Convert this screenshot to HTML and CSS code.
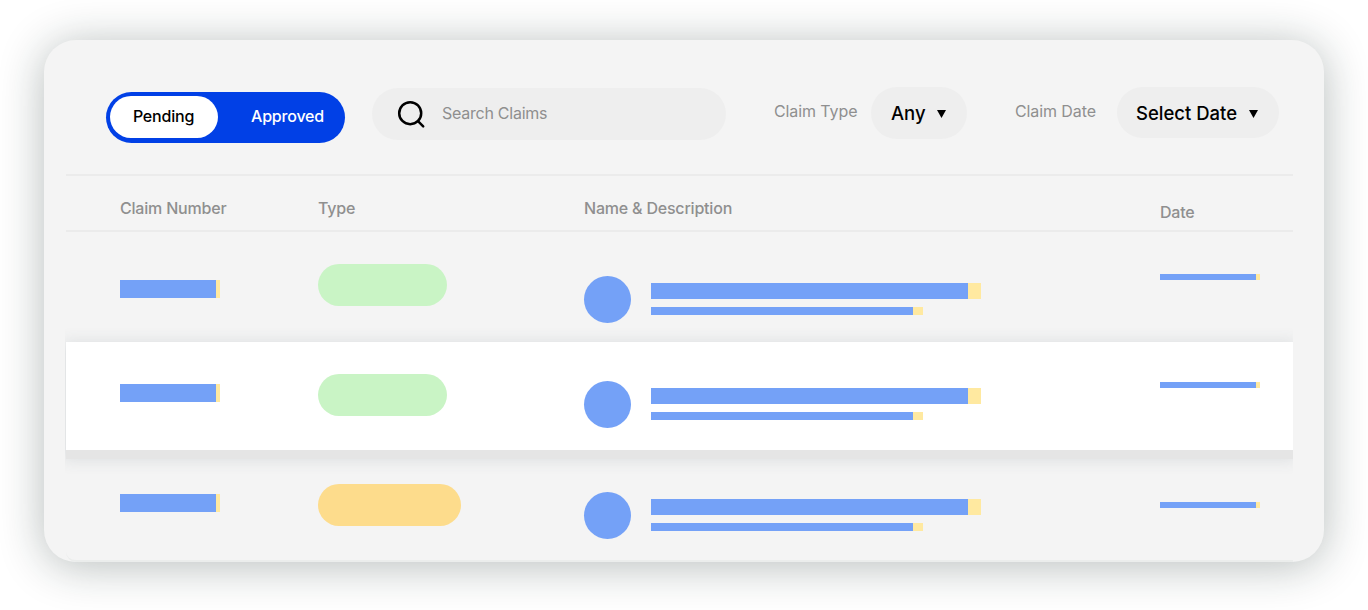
FILE: index.html
```html
<!DOCTYPE html>
<html lang="en">
<head>
    <meta charset="UTF-8">
    <meta name="viewport" content="width=device-width, initial-scale=1.0">
    <title>Claims</title>
    <link rel="stylesheet" href="styles.css">
</head>
<body>
    <div class="card">
        <div class="toolbar">
            <div class="toggle">
                <button class="toggle-btn active">Pending</button>
                <button class="toggle-btn">Approved</button>
            </div>
            <div class="search">
                <svg class="search-icon" width="30" height="30" viewBox="0 0 30 30" fill="none" stroke="#000" stroke-width="2.5" stroke-linecap="round">
                    <circle cx="14.2" cy="14.2" r="11"/>
                    <path d="M22 22.2l5.2 5.1"/>
                </svg>
                <span class="search-text">Search Claims</span>
            </div>
            <span class="filter-label label-type">Claim Type</span>
            <button class="select select-type">Any
                <svg class="arrow" width="9" height="8" viewBox="0 0 9 8"><path d="M0 0h9L4.5 8z"/></svg>
            </button>
            <span class="filter-label label-date">Claim Date</span>
            <button class="select select-date">Select Date
                <svg class="arrow" width="9" height="8" viewBox="0 0 9 8"><path d="M0 0h9L4.5 8z"/></svg>
            </button>
        </div>

        <div class="row header">
            <span>Claim Number</span>
            <span>Type</span>
            <span>Name &amp; Description</span>
            <span class="date-head">Date</span>
        </div>

        <div class="row row-first">
            <div class="bar bar-number"></div>
            <div class="tag tag-green"></div>
            <div class="person">
                <div class="avatar"></div>
                <div class="lines">
                    <div class="bar bar-name"></div>
                    <div class="bar bar-desc"></div>
                </div>
            </div>
            <div class="bar bar-date"></div>
        </div>
        <div class="row row-selected">
            <div class="bar bar-number"></div>
            <div class="tag tag-green"></div>
            <div class="person">
                <div class="avatar"></div>
                <div class="lines">
                    <div class="bar bar-name"></div>
                    <div class="bar bar-desc"></div>
                </div>
            </div>
            <div class="bar bar-date"></div>
        </div>
        <div class="row row-last">
            <div class="bar bar-number"></div>
            <div class="tag tag-orange"></div>
            <div class="person">
                <div class="avatar"></div>
                <div class="lines">
                    <div class="bar bar-name"></div>
                    <div class="bar bar-desc"></div>
                </div>
            </div>
            <div class="bar bar-date"></div>
        </div>
    </div>
</body>
</html>
```
FILE: styles.css
```css
* {
    box-sizing: border-box;
}
body {
    font-family: Inter, Arial, sans-serif;
    font-size: 16px;
    line-height: 20px;
    background-color: #fff;
    margin: 0;
    padding: 40px 44px 0;
    height: 610px;
    overflow: hidden;
}
.card {
    width: 1280px;
    height: 522px;
    padding: 0 31px 0 22px;
    background-color: #f4f4f4;
    border-radius: 32px;
    box-shadow: 0 4px 45px rgba(20, 40, 35, 0.31);
}
button {
    font: inherit;
    border: none;
    padding: 0;
    cursor: pointer;
}

/* Toolbar */
.toolbar {
    display: flex;
    align-items: flex-start;
    height: 136px;
    padding-left: 40px;
    border-bottom: 2px solid #ebebeb;
}
.toggle {
    display: flex;
    width: 239px;
    height: 51px;
    margin: 52px 27px 0 0;
    padding: 4px;
    background-color: #0140e6;
    border-radius: 26px;
}
.toggle-btn {
    width: 124px;
    height: 42px;
    padding: 0 0 2px 16px;
    color: #fff;
    font-weight: 500;
    letter-spacing: -0.2px;
    background: none;
    border-radius: 21px;
}
.toggle-btn.active {
    width: 109px;
    padding: 0 1px 2px 0;
    color: #000;
    background-color: #fff;
}
.search {
    display: flex;
    align-items: center;
    width: 354px;
    height: 52px;
    margin-top: 48px;
    padding-left: 24px;
    background-color: #eee;
    border-radius: 26px;
}
.search-text {
    margin: 0 0 2px 16px;
    color: #8f8f8f;
    letter-spacing: -0.25px;
}
.filter-label {
    color: #8f8f8f;
    letter-spacing: -0.1px;
    white-space: nowrap;
}
.label-type {
    width: 97px;
    margin: 61px 0 0 48px;
}
.label-date {
    width: 102px;
    margin: 61px 0 0 48px;
}
.select {
    display: flex;
    align-items: center;
    gap: 11px;
    height: 52px;
    margin-top: 47px;
    padding-left: 20px;
    color: #000;
    font-size: 18.5px;
    font-weight: 450;
    white-space: nowrap;
    background-color: #eee;
    border-radius: 26px;
}
.select-type {
    width: 96px;
}
.select-date {
    width: 162px;
    height: 51px;
    padding-left: 19px;
    gap: 12px;
}
.arrow {
    margin-top: 2px;
}

/* Table */
.row {
    display: grid;
    grid-template-columns: 198px 266px 576px 1fr;
    align-items: start;
    padding-left: 54px;
}
.header {
    height: 56px;
    padding-top: 22px;
    color: #8f8f8f;
    font-weight: 500;
    letter-spacing: -0.2px;
    border-bottom: 2px solid #ebebeb;
}
.date-head {
    margin-top: 4px;
}
.row-first {
    height: 110px;
    padding-top: 32px;
}
.row-selected {
    position: relative;
    height: 108px;
    padding-top: 32px;
    background-color: #fff;
    box-shadow: 0 9px 0 #e5e5e5, 0 5px 16px 4px rgba(60, 75, 90, 0.14);
    clip-path: inset(-14px 0 -24px -1px);
}
.row-last {
    height: 112px;
    padding-top: 34px;
    border-bottom: 2px solid #ebedec;
    border-bottom-left-radius: 10px;
}
.tag {
    width: 129px;
    height: 42px;
    border-radius: 21px;
}
.tag-green {
    background-color: #c9f4c5;
}
.tag-orange {
    width: 143px;
    background-color: #fddc8c;
}
.person {
    display: flex;
    gap: 20px;
}
.avatar {
    width: 47px;
    height: 47px;
    background-color: #74a1f7;
    border-radius: 50%;
}
.bar {
    background-color: #74a1f7;
    border-right: 4px solid #ffe9a0;
}
.bar-number {
    width: 100px;
    height: 18px;
}
.bar-name {
    width: 330px;
    height: 16px;
    margin: 7px 0 8px;
    border-right-width: 13px;
}
.bar-desc {
    width: 272px;
    height: 8px;
    border-right-width: 10px;
}
.bar-date {
    width: 100px;
    height: 6px;
}

/* Cell offsets inside each row */
.row-first .bar-number {
    margin-top: 16px;
}
.row-first .person {
    margin-top: 12px;
}
.row-first .bar-date {
    margin-top: 10px;
}
.row-selected .bar-number {
    margin-top: 10px;
}
.row-selected .person {
    margin-top: 7px;
}
.row-selected .bar-date {
    margin-top: 8px;
}
.row-last .bar-number {
    margin-top: 10px;
}
.row-last .person {
    margin-top: 8px;
}
.row-last .bar-date {
    margin-top: 18px;
}
```
